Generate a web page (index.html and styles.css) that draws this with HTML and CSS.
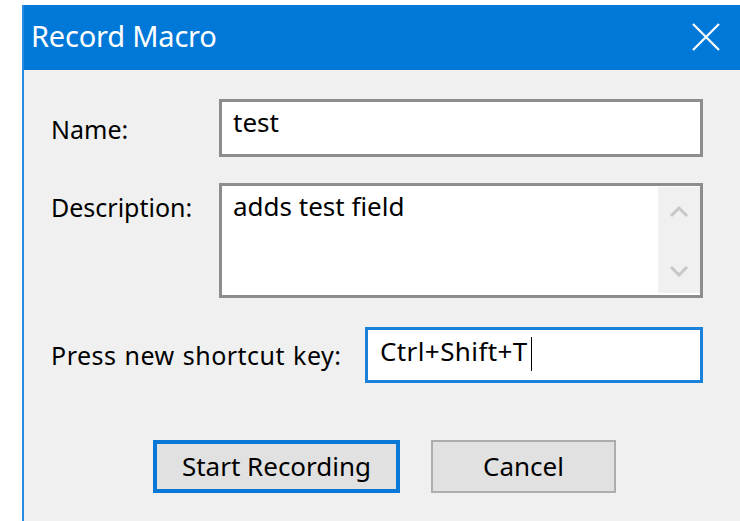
FILE: index.html
```html
<!DOCTYPE html>
<html lang="en">
<head>
<meta charset="utf-8">
<title>Record Macro</title>
<link rel="stylesheet" href="styles.css">
</head>
<body>
<div class="dialog">
  <div class="titlebar">
    <span class="title">Record Macro</span>
    <svg class="close" width="28" height="28" viewBox="0 0 28 28" aria-hidden="true">
      <path d="M1 1 L27 27 M27 1 L1 27" stroke="#fff" stroke-width="2.2" fill="none"/>
    </svg>
  </div>
  <div class="content">
    <div class="row">
      <label class="label label-name">Name:</label>
      <div class="field field-wide">test</div>
    </div>
    <div class="row">
      <label class="label label-desc">Description:</label>
      <div class="field field-wide field-area">
        <span class="area-text">adds test field</span>
        <div class="scrollbar">
          <svg width="20" height="12" viewBox="0 0 20 12" aria-hidden="true"><path d="M2 10 L10 2 L18 10" stroke="#c8c8c8" stroke-width="3" fill="none"/></svg>
          <svg width="20" height="12" viewBox="0 0 20 12" aria-hidden="true"><path d="M2 2 L10 10 L18 2" stroke="#c8c8c8" stroke-width="3" fill="none"/></svg>
        </div>
      </div>
    </div>
    <div class="row">
      <label class="label label-key">Press new shortcut key:</label>
      <div class="field field-key">Ctrl+Shift+T<span class="caret"></span></div>
    </div>
    <div class="buttons">
      <button class="btn btn-default">Start Recording</button>
      <button class="btn">Cancel</button>
    </div>
  </div>
</div>
</body>
</html>
```

FILE: styles.css
```css
* {
  box-sizing: border-box;
}

html, body {
  margin: 0;
  background: #ffffff;
}

body {
  padding: 5px 0 0 22px;
  font-family: "Noto Sans", "Segoe UI", sans-serif;
  overflow: hidden;
}

.dialog {
  width: 740px;
  height: 516px;
  border-left: 2px solid #2b8ae0;
  background: #f0f0f0;
}

.titlebar {
  height: 65px;
  background: #0078d7;
  display: flex;
  align-items: center;
  padding-left: 7px;
  padding-right: 20px;
}

.title {
  color: #ffffff;
  font-size: 29px;
  letter-spacing: -0.2px;
  flex: 1;
  margin-top: -4px;
}

.close {
  margin-right: 22px;
  margin-top: -2px;
}

.content {
  padding: 29px 0 0 27px;
  display: flex;
  flex-direction: column;
}

.row {
  display: flex;
  align-items: flex-start;
  margin-bottom: 26px;
}

.row + .row + .row {
  margin-top: 3px;
}

.label {
  font-size: 25px;
  line-height: 32px;
  color: #000;
  width: 168px;
}

.label-name { padding-top: 14px; }
.label-desc { padding-top: 8px; }
.label-key {
  padding-top: 12px;
  width: 314px;
  letter-spacing: 0.5px;
  word-spacing: 1px;
}

.field {
  background: #ffffff;
  border: 3px solid #8d8d8d;
  font-size: 26px;
  line-height: 32px;
  color: #000;
  padding: 4px 0 0 11px;
}

.field-wide {
  width: 484px;
  height: 58px;
}

.field-area {
  height: 115px;
  display: flex;
  justify-content: space-between;
  padding-right: 0;
}

.area-text {
  display: block;
}

.scrollbar {
  width: 42px;
  margin: -3px 0 1px 0;
  height: 106px;
  background: #f0f0f0;
  display: flex;
  flex-direction: column;
  align-items: center;
  justify-content: space-between;
  padding: 19px 0 16px;
}

.field-key {
  width: 338px;
  height: 56px;
  border-color: #1b82dc;
  padding-left: 12px;
  padding-top: 5px;
  display: flex;
  align-items: flex-start;
  letter-spacing: 0.4px;
}

.caret {
  display: inline-block;
  width: 1px;
  height: 34px;
  background: #000;
  margin-left: 3px;
  margin-top: 2px;
}

.buttons {
  display: flex;
  gap: 31px;
  margin-top: 31px;
  padding-left: 102px;
}

.btn {
  font-family: "Noto Sans", "Segoe UI", sans-serif;
  font-size: 26px;
  color: #000;
  background: #e1e1e1;
  height: 53px;
  border: 2px solid #adadad;
  padding: 0 0 2px;
  margin: 0;
}

.btn-default {
  width: 247px;
  border: 4px solid #0a78d7;
}

.btn + .btn {
  width: 185px;
}
```
